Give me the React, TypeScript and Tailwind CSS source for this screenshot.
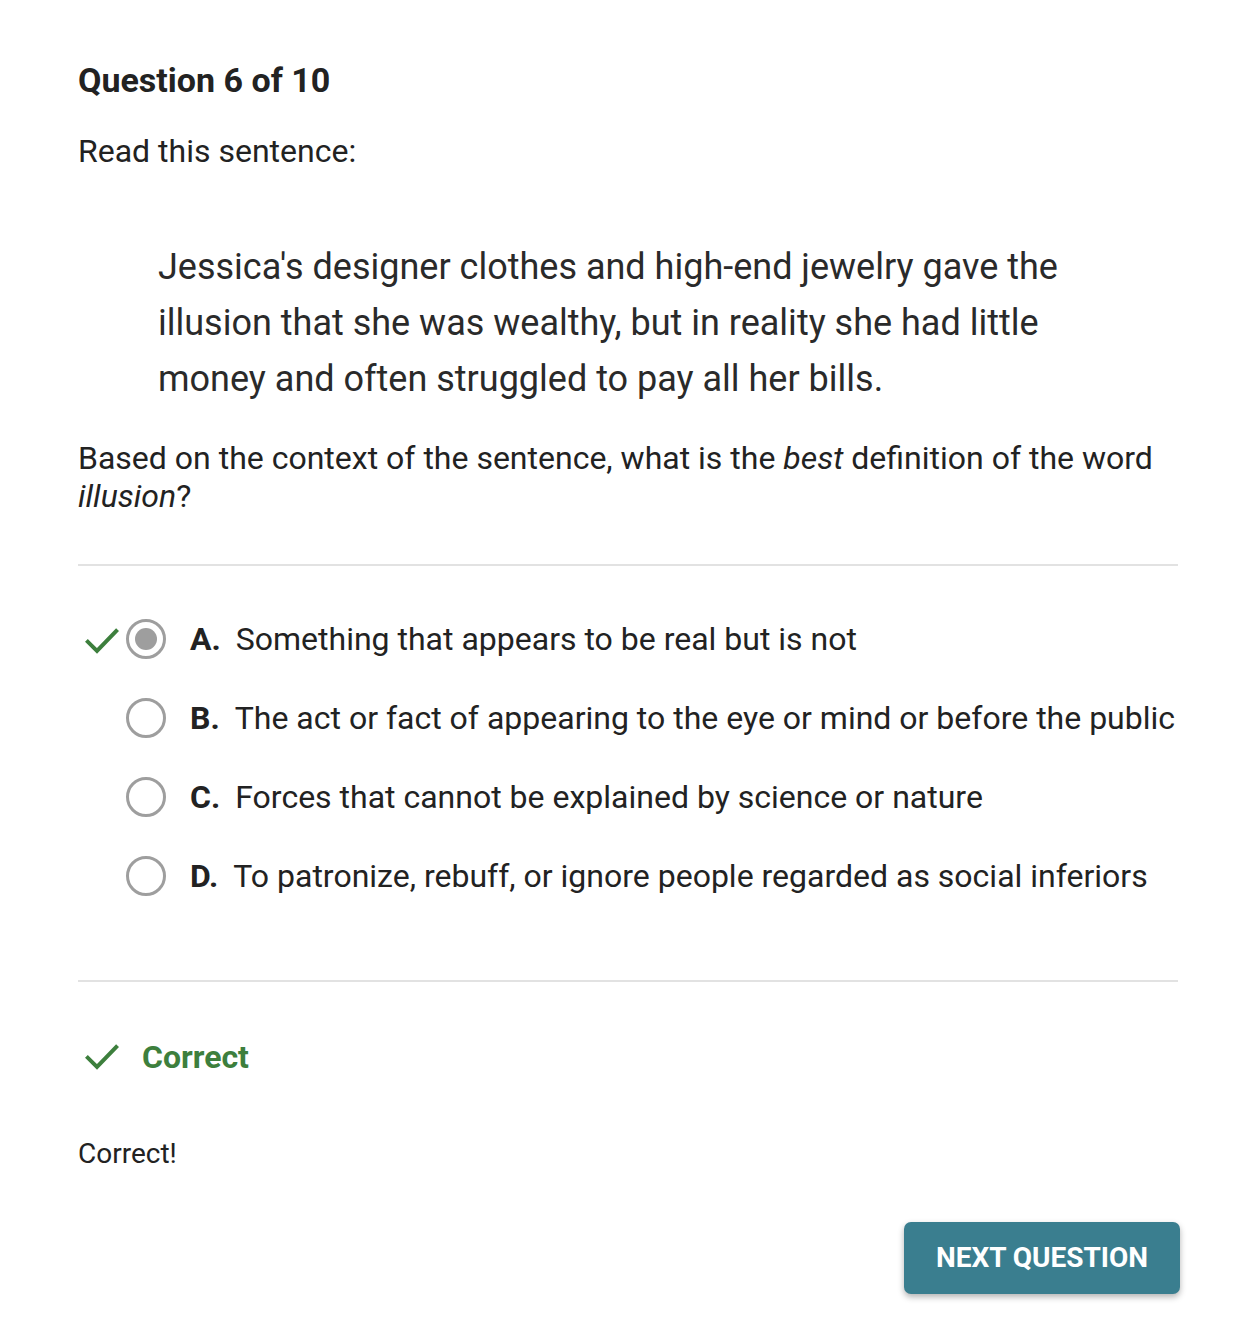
import React from 'react';

const options = [
  { letter: 'A.', text: 'Something that appears to be real but is not', selected: true },
  { letter: 'B.', text: 'The act or fact of appearing to the eye or mind or before the public', selected: false },
  { letter: 'C.', text: 'Forces that cannot be explained by science or nature', selected: false },
  { letter: 'D.', text: 'To patronize, rebuff, or ignore people regarded as social inferiors', selected: false },
];

function Check({ className }: { className?: string }) {
  return (
    <svg viewBox="0 0 24 24" className={className} fill="none" stroke="#3d7f3d" strokeWidth="2.4" strokeLinecap="square">
      <path d="M3.5 12.5l5.5 5.5L20.5 6" />
    </svg>
  );
}

export default function App() {
  return (
    <div className="bg-white min-h-screen text-[#222] font-['Roboto',sans-serif]">
      <div className="w-[1100px] ml-[78px] pt-[58px]">
        <h1 className="text-[34px] font-bold leading-[44px]">Question 6 of 10</h1>
        <p className="mt-[29px] text-[32px] leading-[40px]">Read this sentence:</p>

        <blockquote className="mt-[68px] ml-[80px] pr-[80px] text-[36px] leading-[56px] text-[#2a2a2a]">
          Jessica's designer clothes and high-end jewelry gave the illusion that she was wealthy, but in reality she had little money and often struggled to pay all her bills.
        </blockquote>

        <p className="mt-[32px] text-[32px] leading-[38px]">
          Based on the context of the sentence, what is the <em>best</em> definition of the word <em>illusion</em>?
        </p>

        <div className="mt-[49px] border-t-2 border-[#e2e2e2]" />

        <div className="mt-[51px] flex flex-col gap-[35px]">
          {options.map((o) => (
            <div key={o.letter} className="flex items-center h-[44px]">
              <div className="w-[48px] flex items-center">
                {o.selected && <Check className="w-[40px] h-[40px] ml-[4px] mt-[4px]" />}
              </div>
              <div className="w-[40px] h-[40px] rounded-full border-[3px] border-[#9e9e9e] flex items-center justify-center">
                {o.selected && <div className="w-[22px] h-[22px] rounded-full bg-[#9e9e9e]" />}
              </div>
              <span className="ml-[24px] text-[32px] font-bold">{o.letter}</span>
              <span className="ml-[15px] text-[32px] whitespace-nowrap">{o.text}</span>
            </div>
          ))}
        </div>

        <div className="mt-[82px] border-t-2 border-[#e2e2e2]" />

        <div className="mt-[55px] flex items-center h-[40px]">
          <Check className="w-[40px] h-[40px] ml-[4px]" />
          <span className="ml-[20px] text-[32px] font-bold text-[#3d7f3d]">Correct</span>
        </div>

        <p className="mt-[56px] text-[28px] leading-[42px]">Correct!</p>

        <div className="mt-[47px] flex justify-end mr-[-2px]">
          <button className="w-[276px] h-[72px] rounded-[7px] bg-[#3a7e8f] text-white text-[28px] font-bold shadow-[0_3px_6px_rgba(0,0,0,0.3)]">
            NEXT QUESTION
          </button>
        </div>
      </div>
    </div>
  );
}
